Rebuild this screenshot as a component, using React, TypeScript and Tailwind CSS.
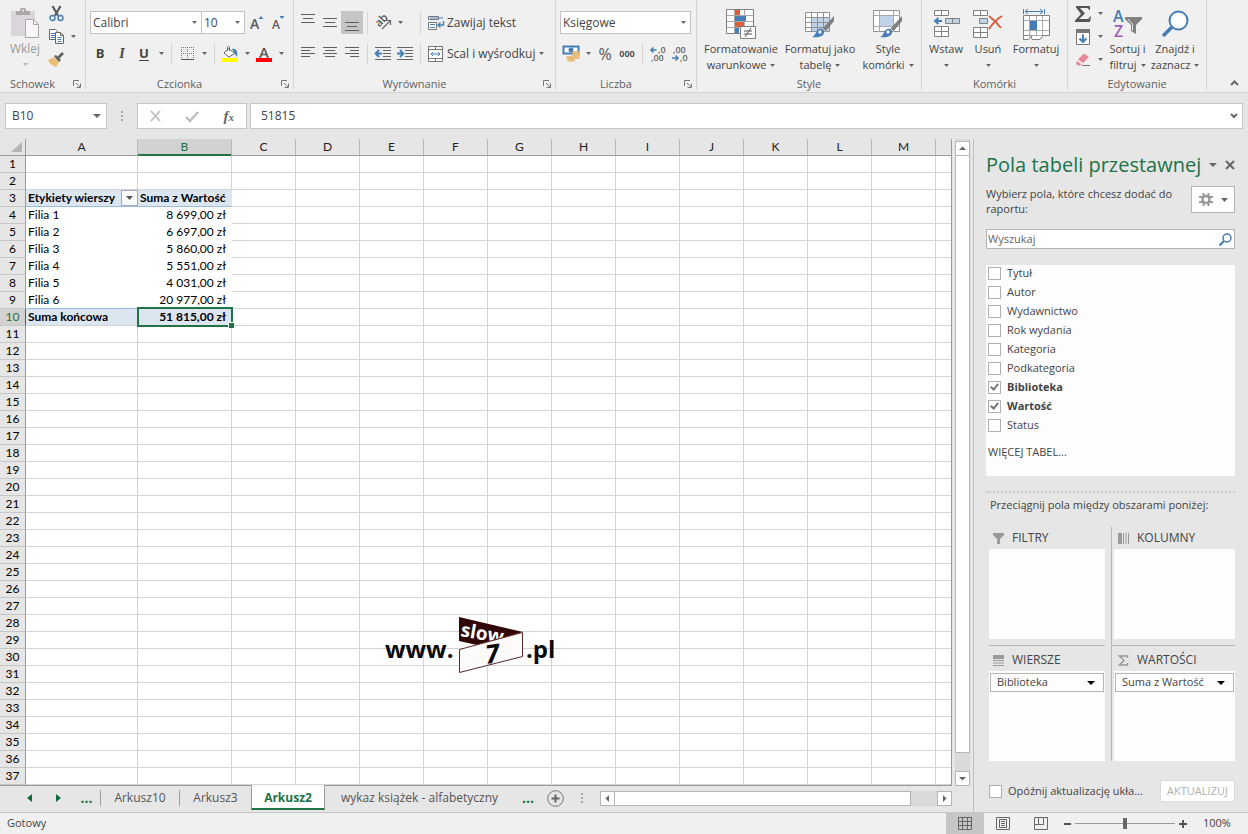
import type { ReactNode } from 'react';
import clsx from 'clsx';

const columns = ['A', 'B', 'C', 'D', 'E', 'F', 'G', 'H', 'I', 'J', 'K', 'L', 'M'];
const rowNumbers = Array.from({ length: 37 }, (_, i) => i + 1);

const pivotRows: Record<number, { label: string; value: string }> = {
  4: { label: 'Filia 1', value: '8 699,00 zł' },
  5: { label: 'Filia 2', value: '6 697,00 zł' },
  6: { label: 'Filia 3', value: '5 860,00 zł' },
  7: { label: 'Filia 4', value: '5 551,00 zł' },
  8: { label: 'Filia 5', value: '4 031,00 zł' },
  9: { label: 'Filia 6', value: '20 977,00 zł' },
};

const fields = [
  { name: 'Tytuł', checked: false },
  { name: 'Autor', checked: false },
  { name: 'Wydawnictwo', checked: false },
  { name: 'Rok wydania', checked: false },
  { name: 'Kategoria', checked: false },
  { name: 'Podkategoria', checked: false },
  { name: 'Biblioteka', checked: true },
  { name: 'Wartość', checked: true },
  { name: 'Status', checked: false },
];

function Icon({ w, h, children }: { w: number; h: number; children: ReactNode }) {
  return (
    <svg width={w} height={h} viewBox={`0 0 ${w} ${h}`} fill="none" className="shrink-0 overflow-visible" aria-hidden="true">
      {children}
    </svg>
  );
}

function Caret({ className = 'text-[#666]' }: { className?: string }) {
  return (
    <svg width="5" height="3" viewBox="0 0 5 3" className={clsx('shrink-0', className)} aria-hidden="true">
      <path d="M0 0h5L2.5 3z" fill="currentColor" />
    </svg>
  );
}

function WideCaret({ className = 'text-[#666]' }: { className?: string }) {
  return (
    <svg width="8" height="4" viewBox="0 0 8 4" className={clsx('shrink-0', className)} aria-hidden="true">
      <path d="M0 0h8L4 4z" fill="currentColor" />
    </svg>
  );
}

function Tool({ label, active, children }: { label: string; active?: boolean; children: ReactNode }) {
  return (
    <button
      type="button"
      aria-label={label}
      className={clsx('flex h-[23px] w-[22px] shrink-0 items-center justify-center', active && 'bg-[#c5c5c5]')}
    >
      {children}
    </button>
  );
}

function Drop({ label }: { label: string }) {
  return (
    <button type="button" aria-label={label} className="flex h-[23px] w-3 shrink-0 items-center justify-center">
      <Caret />
    </button>
  );
}

function Divider() {
  return <span className="mx-1 h-[22px] w-px shrink-0 bg-[#d5d5d5]" />;
}

function Group({ title, className, launcher, children }: {
  title: string;
  className: string;
  launcher?: boolean;
  children: ReactNode;
}) {
  return (
    <section aria-label={title} className={clsx('relative flex shrink-0 flex-col border-r border-[#d5d5d5]', className)}>
      <div className="h-[78px] shrink-0">{children}</div>
      <div className="flex h-3 items-center pr-2">
        <span className={clsx('flex-1 text-center text-[11px] leading-4 text-[#5e5e5e]', launcher ? 'pr-3' : 'pl-2')}>{title}</span>
        {launcher && (
          <button type="button" aria-label={`${title} – więcej opcji`} className="absolute right-1 bottom-[2px]">
            <Icon w={8} h={8}>
              <path d="M.5 6V.5H6M3 3l4 4M7.5 3.5v4h-4" stroke="#777" />
            </Icon>
          </button>
        )}
      </div>
    </section>
  );
}

function BigButton({ icon, lines, className }: { icon: ReactNode; lines: string[]; className: string }) {
  return (
    <button type="button" className={clsx('flex shrink-0 flex-col items-center text-[11px] leading-4', className)}>
      <span className="flex h-[34px] items-center">{icon}</span>
      <span className="whitespace-nowrap">{lines[0]}</span>
      <span className="flex h-4 items-center gap-1 whitespace-nowrap">
        {lines[1]}
        <Caret />
      </span>
    </button>
  );
}

function Combo({ label, value, className }: { label: string; value: string; className: string }) {
  return (
    <span className={clsx('relative flex h-[23px] items-center border border-[#c3c3c3] bg-white', className)}>
      <select aria-label={label} defaultValue={value} className="h-full w-full appearance-none pl-[2px] text-xs outline-none">
        <option>{value}</option>
      </select>
      <span className="pointer-events-none absolute right-1">
        <Caret />
      </span>
    </span>
  );
}

function Lines({ widths, align }: { widths: number[]; align: 'l' | 'c' | 'r' }) {
  return (
    <Icon w={14} h={widths.length * 4 - 3}>
      {widths.map((w, i) => {
        const x = align === 'l' ? 0 : align === 'r' ? 14 - w : (14 - w) / 2;
        return <rect key={i} x={x} y={i * (widths.length === 4 ? 3 : 4)} width={w} height="1" fill="#5f5f5f" />;
      })}
    </Icon>
  );
}

function ClipboardGroup() {
  return (
    <Group title="Schowek" launcher className="w-[86px]">
      <div className="flex pl-[7px]">
        <button type="button" className="flex w-9 flex-col items-center pt-2 text-xs leading-4 text-[#9b9b9b]">
          <Icon w={28} h={31}>
            <path d="M0 3h24v25H0z" fill="#d9d5da" />
            <path d="M5 3h4V1.500A1.500 1.500 0 0 1 10.500 0h3A1.500 1.500 0 0 1 15 1.500V3h4v4H5z" fill="#aaa6aa" />
            <circle cx="12" cy="2.500" r="1" fill="#f0f0f0" />
            <path d="M14.500 11.500h8l5 5v13h-13z" fill="#f8f6f8" stroke="#aaa6aa" />
            <path d="M22.500 11.500v5h5" stroke="#aaa6aa" />
          </Icon>
          <span className="mt-[2px]">Wklej</span>
          <Caret className="mt-[6px] text-[#b5b5b5]" />
        </button>
        <div className="flex flex-col pt-[2px] pl-[2px]">
          <Tool label="Wytnij">
            <Icon w={15} h={16}>
              <path d="M3.500 0l5.500 9.500M11.500 0L6 9.500" stroke="#5a5a5a" strokeWidth="2.200" />
              <circle cx="3.500" cy="12" r="2.500" stroke="#457db5" strokeWidth="1.400" />
              <circle cx="11.500" cy="12" r="2.500" stroke="#457db5" strokeWidth="1.400" />
            </Icon>
          </Tool>
          <div className="flex">
            <Tool label="Kopiuj">
              <Icon w={15} h={15}>
                <path d="M.5.5h6l3 3v7h-9z" fill="#fff" stroke="#666" />
                <path d="M2 4.500h4M2 6.500h4M2 8.500h4" stroke="#4a80bb" />
                <path d="M6.500 3.500h5l3 3v8h-8z" fill="#fff" stroke="#666" />
                <path d="M11.500 3.500v3h3" stroke="#666" />
                <path d="M8.500 8.500h4M8.500 10.500h4M8.500 12.500h4" stroke="#4a80bb" />
              </Icon>
            </Tool>
            <Drop label="Opcje kopiowania" />
          </div>
          <Tool label="Malarz formatów">
            <Icon w={16} h={14}>
              <path d="M0 7l6-3 5 5-3 5-3-1-1-2-1 1z" fill="#eebd77" />
              <path d="M6 3l2-1 5 5-2 2z" fill="#5f5f5f" />
              <path d="M10 5l5-5" stroke="#5f5f5f" strokeWidth="2.600" />
            </Icon>
          </Tool>
        </div>
      </div>
    </Group>
  );
}

function FontGroup() {
  return (
    <Group title="Czcionka" launcher className="w-[208px]">
      <div className="flex flex-col gap-2 pt-[11px] pl-[3px]">
        <div className="flex pl-px">
          <Combo label="Czcionka" value="Calibri" className="w-28" />
          <Combo label="Rozmiar czcionki" value="10" className="-ml-px w-11" />
          <button type="button" aria-label="Zwiększ rozmiar czcionki" className="ml-[5px] flex w-[17px] items-center">
            <Icon w={14} h={13}>
              <text x="0" y="13" fontSize="14" fontWeight="600" fill="#5a5a5a">A</text>
              <path d="M8.500 3h5L11 0z" fill="#457db5" />
            </Icon>
          </button>
          <button type="button" aria-label="Zmniejsz rozmiar czcionki" className="ml-1 flex w-[17px] items-center">
            <Icon w={14} h={13}>
              <text x="1" y="13" fontSize="12" fontWeight="600" fill="#5a5a5a">A</text>
              <path d="M8.500 0h5L11 3z" fill="#457db5" />
            </Icon>
          </button>
        </div>
        <div className="flex items-center">
          <Tool label="Pogrubienie"><b className="text-[13px]">B</b></Tool>
          <Tool label="Kursywa"><i className="text-sm font-bold [font-family:'Liberation_Serif',serif]">I</i></Tool>
          <Tool label="Podkreślenie"><b className="text-[13px] underline underline-offset-2">U</b></Tool>
          <Drop label="Opcje podkreślenia" />
          <Divider />
          <Tool label="Obramowanie">
            <Icon w={13} h={13}>
              <path d="M.5 0v12M6.500 0v12M12.500 0v12M0 .5h13M0 6.500h13" stroke="#777" strokeDasharray="1 1" />
              <path d="M0 12.500h13" stroke="#555" />
            </Icon>
          </Tool>
          <Drop label="Opcje obramowania" />
          <Divider />
          <Tool label="Kolor wypełnienia">
            <Icon w={16} h={16}>
              <path d="M6.500 2.500l6 5-5.500 3.500-5-4z" fill="#fff" stroke="#666" />
              <path d="M5.500 5V1.500a1 1 0 0 1 2 0V5" stroke="#666" />
              <path d="M10 3c4-1 6 2 5 8l-2-3z" fill="#457db5" />
              <path d="M0 12h16v4H0z" fill="#ff0" />
            </Icon>
          </Tool>
          <Drop label="Opcje wypełnienia" />
          <Tool label="Kolor czcionki">
            <Icon w={16} h={16}>
              <text x="8" y="12" fontSize="15" fontWeight="600" textAnchor="middle" fill="#5a5a5a">A</text>
              <path d="M0 12h16v4H0z" fill="#f00" />
            </Icon>
          </Tool>
          <Drop label="Opcje koloru czcionki" />
        </div>
      </div>
    </Group>
  );
}

function AlignGroup() {
  return (
    <Group title="Wyrównanie" launcher className="w-[262px]">
      <div className="flex flex-col gap-2 pt-[11px] pl-[3px]">
        <div className="flex items-center">
          <Tool label="Wyrównaj do góry"><span className="pb-2"><Lines widths={[14, 10, 14]} align="c" /></span></Tool>
          <Tool label="Wyrównaj do środka"><Lines widths={[14, 10, 14]} align="c" /></Tool>
          <Tool label="Wyrównaj do dołu" active><span className="pt-2"><Lines widths={[14, 10, 14]} align="c" /></span></Tool>
          <Divider />
          <Tool label="Orientacja">
            <Icon w={17} h={15}>
              <text x="2" y="11" fontSize="11" fontWeight="600" fill="#555" transform="rotate(-45 5 9)">ab</text>
              <path d="M7 14l8-8M11 5.500h4.500V10" stroke="#666" strokeWidth="1.200" />
            </Icon>
          </Tool>
          <Drop label="Opcje orientacji" />
          <span className="w-[10px]" />
          <Divider />
          <button type="button" className="ml-[3px] flex h-[23px] items-center gap-[3px] text-xs">
            <Icon w={16} h={16}>
              <path d="M.5 1.500h10v3H.5zM.5 7.500h8v7h-8z" fill="#fff" stroke="#777" />
              <path d="M2 3h13M2 9.500h5M2 12.500h5" stroke="#457db5" />
              <path d="M15.500 6v4H10M12.500 7.500L10 10l2.500 2.500" stroke="#457db5" strokeWidth="1.400" />
            </Icon>
            Zawijaj tekst
          </button>
        </div>
        <div className="flex items-center">
          <Tool label="Wyrównaj do lewej"><Lines widths={[14, 9, 14, 9]} align="l" /></Tool>
          <Tool label="Wyśrodkuj"><Lines widths={[14, 10, 14, 10]} align="c" /></Tool>
          <Tool label="Wyrównaj do prawej"><Lines widths={[14, 9, 14, 9]} align="r" /></Tool>
          <Divider />
          <Tool label="Zmniejsz wcięcie">
            <Icon w={16} h={13}>
              <path d="M0 .5h16M8 3.500h8M8 6.500h8M8 9.500h8M0 12.500h16" stroke="#666" />
              <path d="M7 6.500H2M4 3L.7 6.500 4 10" stroke="#457db5" strokeWidth="2" />
            </Icon>
          </Tool>
          <Tool label="Zwiększ wcięcie">
            <Icon w={16} h={13}>
              <path d="M0 .5h16M8 3.500h8M8 6.500h8M8 9.500h8M0 12.500h16" stroke="#666" />
              <path d="M0 6.500h5M3 3l3.300 3.500L3 10" stroke="#457db5" strokeWidth="2" />
            </Icon>
          </Tool>
          <Divider />
          <button type="button" className="ml-[3px] flex h-[23px] items-center gap-[3px] text-xs">
            <Icon w={16} h={16}>
              <path d="M.5.5h14v15H.5zM.5 3.500h14M.5 12.500h14M7.500.5v3M7.500 12.500v3" fill="#fff" stroke="#777" />
              <path d="M3 8h9M5 6L3 8l2 2M10 6l2 2-2 2" stroke="#457db5" />
            </Icon>
            Scal i wyśrodkuj
          </button>
          <Drop label="Opcje scalania" />
        </div>
      </div>
    </Group>
  );
}

function NumberGroup() {
  return (
    <Group title="Liczba" launcher className="w-[141px]">
      <div className="flex flex-col gap-2 pt-[11px] pl-1">
        <Combo label="Format liczb" value="Księgowe" className="mr-[5px]" />
        <div className="flex items-center">
          <Tool label="Format księgowy">
            <Icon w={17} h={16}>
              <path d="M.5.5h15v7H.5z" fill="#fff" stroke="#457db5" strokeWidth="2" />
              <circle cx="8" cy="4" r="2.500" fill="#457db5" />
              <ellipse cx="13" cy="6.500" rx="4" ry="1.500" fill="#e9bb78" />
              <ellipse cx="13" cy="9" rx="4" ry="1.500" fill="#e9bb78" />
              <ellipse cx="13" cy="11.500" rx="4" ry="1.500" fill="#e9bb78" />
              <ellipse cx="7" cy="11.500" rx="4" ry="1.500" fill="#e9bb78" />
              <ellipse cx="8" cy="14" rx="4" ry="1.500" fill="#e9bb78" />
            </Icon>
          </Tool>
          <Drop label="Opcje waluty" />
          <Tool label="Zapis procentowy"><span className="text-base text-[#555]">%</span></Tool>
          <Tool label="Zapis dziesiętny"><b className="text-[9px] text-[#555]">000</b></Tool>
          <Divider />
          <Tool label="Zwiększ dziesiętne">
            <Icon w={16} h={16}>
              <text x="8" y="7" fontSize="9" fontWeight="600" fill="#666">,0</text>
              <text x="1" y="15" fontSize="9" fontWeight="600" fill="#666">,00</text>
              <path d="M6.500 4h-5M3.500 1.500L1 4l2.500 2.500" stroke="#457db5" strokeWidth="1.500" />
            </Icon>
          </Tool>
          <Tool label="Zmniejsz dziesiętne">
            <Icon w={16} h={16}>
              <text x="1" y="7" fontSize="9" fontWeight="600" fill="#666">,00</text>
              <text x="8" y="15" fontSize="9" fontWeight="600" fill="#666">,0</text>
              <path d="M0 12h5.500M3.500 9.500L6 12l-2.500 2.500" stroke="#457db5" strokeWidth="1.500" />
            </Icon>
          </Tool>
        </div>
      </div>
    </Group>
  );
}

function Brush() {
  return (
    <>
      <path d="M29 7L17 20l3 3L29 12z" fill="#808080" />
      <path d="M17.500 19.500l3 3" stroke="#f0f0f0" />
      <path d="M7 28c4-1 3-6 7-8 3-1 6 1 5 4-1 4-7 5-12 4z" fill="#457db5" />
      <circle cx="15" cy="23" r="1.800" fill="#e8f0f8" />
    </>
  );
}

function StylesGroup() {
  return (
    <Group title="Style" className="w-[225px]">
      <div className="flex pt-[7px] pl-1">
        <BigButton
          className="w-20"
          lines={['Formatowanie', 'warunkowe']}
          icon={
            <Icon w={31} h={31}>
              <path d="M.5.5h27v24H.5z" fill="#fff" stroke="#808080" />
              <path d="M8.500 1v23M18.500 1v23M1 6.500h26M1 12.500h26M1 18.500h26" stroke="#aaa" />
              <path d="M9 1h5v5H9zM9 13h9v5H9z" fill="#d9603b" />
              <path d="M9 7h11v5H9zM9 19h4v5H9z" fill="#457db5" />
              <path d="M14.500 17.500h15v12h-15z" fill="#fff" stroke="#808080" />
              <path d="M18 22h8M18 25h8M25 19l-6 9" stroke="#555" />
            </Icon>
          }
        />
        <BigButton
          className="w-[78px]"
          lines={['Formatuj jako', 'tabelę']}
          icon={
            <Icon w={30} h={30}>
              <path d="M.5 3.500h24v19H.5z" fill="#fff" />
              <path d="M6.500 9h18v14h-18z" fill="#c0d3e9" />
              <path d="M.5 3.500h24v19H.5zM6.500 4v19M12.500 4v19M18.500 4v19M1 8.500h24M1 13.500h24M1 18.500h24" stroke="#909090" />
              <Brush />
            </Icon>
          }
        />
        <BigButton
          className="w-[58px]"
          lines={['Style', 'komórki']}
          icon={
            <Icon w={30} h={30}>
              <path d="M.5 1.500h26v21H.5z" fill="#fff" stroke="#909090" />
              <path d="M6.500 2v21M20.500 2v21M1 6.500h26M1 17.500h26" stroke="#aaa" />
              <path d="M7 7h13v10H7z" fill="#c0d3e9" />
              <Brush />
            </Icon>
          }
        />
      </div>
    </Group>
  );
}

function CellsGroup() {
  return (
    <Group title="Komórki" className="w-[146px]">
      <div className="flex pt-[7px] pl-1">
        <BigButton
          className="w-10"
          lines={['Wstaw', '']}
          icon={
            <Icon w={27} h={28}>
              <path d="M1.500.5h14v5h-14zM8.500.5v5M1.500 16.500h14v10h-14zM8.500 16.500v10M1.500 21.500h14" fill="#fff" stroke="#808080" />
              <path d="M12.500 8.500h14v5h-14zM19.500 8.500v5" fill="#c0d3e9" stroke="#808080" />
              <path d="M9 11H3M5.500 8L2 11l3.500 3" stroke="#457db5" strokeWidth="2" />
            </Icon>
          }
        />
        <BigButton
          className="w-11"
          lines={['Usuń', '']}
          icon={
            <Icon w={30} h={28}>
              <path d="M.5.5h14v5H.5zM7.500.5v5M.5 17.500h14v10H.5zM7.500 17.500v10M.5 22.500h14" fill="#fff" stroke="#808080" />
              <path d="M6.500 8.500h8v5h-8z" fill="#c0d3e9" stroke="#808080" />
              <path d="M16 6c4 3 8 7 12 12M29 6c-5 3-9 7-13 13" stroke="#d9603b" strokeWidth="2" />
            </Icon>
          }
        />
        <BigButton
          className="w-[52px]"
          lines={['Formatuj', '']}
          icon={
            <Icon w={29} h={31}>
              <path d="M1.500 0v5M22.500 0v5M3 2.500h18M6 0L3 2.500 6 5M18 0l3 2.500L18 5" stroke="#457db5" />
              <path d="M1.500 6.500h26v20h-26z" fill="#fff" stroke="#808080" />
              <path d="M7.500 7v19M14.500 7v19M20.500 7v19M2 11.500h25M2 21.500h25" stroke="#aaa" />
              <path d="M8 12h7v9H8z" fill="#457db5" />
              <path d="M1.500 27v3.500h5L9 27l1 3.500h8l3-4" fill="#fff" stroke="#808080" />
            </Icon>
          }
        />
      </div>
    </Group>
  );
}

function EditGroup() {
  return (
    <Group title="Edytowanie" className="w-[139px]">
      <div className="flex pl-1">
        <div className="flex w-[34px] shrink-0 flex-col pt-[2px]">
          <div className="flex">
            <Tool label="Autosumowanie">
              <Icon w={16} h={16}>
                <path d="M1 0h14v4h-1c-.4-1.400-1-2-3-2H5l5 5.500L4 13h8c2 0 2.500-1 3-2.500h1L15 16H0v-1.500L6 8 1 1.500z" fill="#555" />
              </Icon>
            </Tool>
            <Drop label="Opcje sumowania" />
          </div>
          <div className="flex">
            <Tool label="Wypełnienie">
              <Icon w={14} h={16}>
                <path d="M.5.5h13v15H.5z" fill="#fff" stroke="#777" />
                <path d="M0 0h14v4H0z" fill="#777" />
                <path d="M7 5.500V13M3.500 9.500L7 13l3.500-3.500" stroke="#457db5" strokeWidth="2" />
              </Icon>
            </Tool>
            <Drop label="Opcje wypełnienia serii" />
          </div>
          <div className="flex">
            <Tool label="Wyczyść">
              <Icon w={14} h={14}>
                <path d="M8 .5L13 4 7 10 2 6.500z" fill="#ea8795" />
                <path d="M1 8l4.500 3.200L4 12.500H1.500L0 10.500z" fill="#ea8795" />
                <path d="M6 12.500h8" stroke="#777" />
              </Icon>
            </Tool>
            <Drop label="Opcje czyszczenia" />
          </div>
        </div>
        <BigButton
          className="w-[43px] pt-[7px]"
          lines={['Sortuj i', 'filtruj']}
          icon={
            <Icon w={30} h={30}>
              <text x="0" y="13" fontSize="16" fontWeight="600" fill="#457db5">A</text>
              <text x="1" y="28" fontSize="16" fontWeight="600" fill="#9b5fba">Z</text>
              <path d="M12 8h17v2l-6 6v9l-5-3v-6l-6-6z" fill="#808080" />
              <path d="M15 10l4.500 5.500v6" stroke="#e4e4e4" />
            </Icon>
          }
        />
        <BigButton
          className="w-[52px] pt-[7px]"
          lines={['Znajdź i', 'zaznacz']}
          icon={
            <Icon w={28} h={28}>
              <circle cx="17.500" cy="10.500" r="9" fill="#fff" stroke="#457db5" strokeWidth="2" />
              <path d="M11 17L2 26" stroke="#457db5" strokeWidth="3.500" />
            </Icon>
          }
        />
      </div>
    </Group>
  );
}

function FormulaBar() {
  return (
    <div className="flex items-center bg-[#e6e6e6] px-[5px] py-[10px] text-xs">
      <div className="flex h-[26px] w-[102px] items-center border border-[#c6c6c6] bg-white pr-[5px]">
        <input aria-label="Pole nazwy" defaultValue="B10" className="w-full min-w-0 flex-1 pl-[6px] outline-none" />
        <WideCaret />
      </div>
      <div className="flex w-[30px] flex-col items-center gap-[2px]">
        {[0, 1, 2].map(i => <span key={i} className="size-[2px] bg-[#aaa]" />)}
      </div>
      <div className="flex h-[26px] w-[110px] items-center justify-around border border-[#c6c6c6] bg-white">
        <button type="button" aria-label="Anuluj">
          <Icon w={11} h={10}><path d="M1 0l9 10M10 0L1 10" stroke="#bdbdbd" strokeWidth="1.800" /></Icon>
        </button>
        <button type="button" aria-label="Wpis">
          <Icon w={14} h={11}><path d="M1 6l4 4L13 1" stroke="#bdbdbd" strokeWidth="2.400" /></Icon>
        </button>
        <button type="button" className="text-[15px] leading-none font-bold text-[#666] italic [font-family:'Liberation_Serif',serif]">
          f<span className="text-[11px]">x</span>
        </button>
      </div>
      <div className="ml-[3px] flex h-[26px] flex-1 items-center border border-[#c6c6c6] bg-white pr-1">
        <input aria-label="Pasek formuły" defaultValue="51815" className="min-w-0 flex-1 pl-[10px] text-xs outline-none" />
        <button type="button" aria-label="Rozwiń pasek formuły">
          <Icon w={8} h={6}><path d="M1 1l3 3 3-3" stroke="#666" strokeWidth="2" /></Icon>
        </button>
      </div>
    </div>
  );
}

function Cell({ row, col }: { row: number; col: string }) {
  const base = 'h-[17px] border-b p-0';
  if (col === 'A' && row === 3) {
    return (
      <td className={clsx(base, 'border-[#9bbce0] bg-[#dce6f1] font-bold whitespace-nowrap')}>
        <div className="flex h-4 items-center justify-between pl-[2px]">
          Etykiety wierszy
          <button type="button" aria-label="Filtr etykiet" className="flex h-4 w-[17px] items-center justify-center border border-[#a5acb5] bg-[#fbfcfd]">
            <svg width="7" height="4" viewBox="0 0 7 4" aria-hidden="true"><path d="M0 0h7L3.500 4z" fill="#555" /></svg>
          </button>
        </div>
      </td>
    );
  }
  if (col === 'B' && row === 3) {
    return <td className={clsx(base, 'border-[#9bbce0] bg-[#dce6f1] pl-[2px] font-bold whitespace-nowrap')}>Suma z Wartość</td>;
  }
  if (col === 'A' && row === 10) {
    return <td className={clsx(base, 'border-[#d4d4d4] bg-[#dce6f1] pl-[2px] font-bold')}>Suma końcowa</td>;
  }
  if (col === 'B' && row === 10) {
    return (
      <td className={clsx(base, 'relative border-[#d4d4d4] bg-[#dce6f1] pr-[6px] text-right font-bold')}>
        51 815,00 zł
        <span className="absolute -inset-x-px -top-[2px] -bottom-[2px] border-2 border-[#217346]" />
        <span className="absolute -right-[2px] -bottom-[3px] size-[6px] border-t border-l border-white bg-[#217346]" />
      </td>
    );
  }
  const data = pivotRows[row];
  if (data && col === 'A') {
    return <td className={clsx(base, 'pl-[2px]', row === 9 ? 'border-[#9bbce0]' : 'border-white')}>{data.label}</td>;
  }
  if (data && col === 'B') {
    return <td className={clsx(base, 'pr-[6px] text-right', row === 9 ? 'border-[#9bbce0]' : 'border-white')}>{data.value}</td>;
  }
  return <td className={clsx(base, 'border-r border-[#d4d4d4]')} />;
}

function Logo() {
  return (
    <svg
      width="172"
      height="60"
      viewBox="0 0 172 60"
      role="img"
      aria-label="www.slow7.pl"
      className="absolute top-[476px] left-[385px]"
    >
      <defs>
        <clipPath id="ribbon">
          <path d="M74 2l64 15-49 13-15-3z" />
        </clipPath>
      </defs>
      <text x="0" y="43" fontSize="24" fontWeight="700" fill="#0b0b0b">www.</text>
      <path d="M74 2l64 15-46 13-18-4z" fill="#300606" />
      <g clipPath="url(#ribbon)">
        <text x="75" y="21" fontSize="19" fontWeight="700" fill="#fff" transform="rotate(10 75 21)">slow</text>
      </g>
      <path d="M74.500 34.500L137.500 17.500v24L74.500 57.500z" fill="#fdfafb" stroke="#5a2a2a" />
      <text x="100" y="48" fontSize="26" fontWeight="700" fontStyle="italic" fill="#0b0b0b" transform="rotate(-8 107 38)">7</text>
      <text x="141" y="43" fontSize="24" fontWeight="700" fill="#0b0b0b">.pl</text>
    </svg>
  );
}

function Sheet() {
  return (
    <div className="relative min-w-0 flex-1 overflow-hidden border-r border-b border-[#9b9b9b]">
      <table className="w-full table-fixed border-separate border-spacing-0 bg-white text-xs leading-4 text-black [font-family:Lato,sans-serif]">
        <colgroup>
          <col className="w-[26px]" />
          <col className="w-28" />
          <col className="w-[94px]" />
          {columns.slice(2).map(c => <col key={c} className="w-16" />)}
          <col />
        </colgroup>
        <thead>
          <tr className="text-[#222]">
            <th className="h-[17px] border-r border-b border-[#9b9b9b] bg-[#e6e6e6] p-0">
              <svg width="11" height="10" viewBox="0 0 11 10" className="mr-[3px] ml-auto" aria-hidden="true">
                <path d="M11 0v10H0z" fill="#b4b4b4" />
              </svg>
            </th>
            {columns.map(c => (
              <th
                key={c}
                className={clsx(
                  'border-r border-b border-r-[#b8b8b8] p-0 font-normal',
                  c === 'B'
                    ? 'border-b-[#217346] bg-[#d2d2d2] text-[#217346] shadow-[inset_0_-1px_0_#217346]'
                    : 'border-b-[#9b9b9b] bg-[#e6e6e6]',
                )}
              >
                {c}
              </th>
            ))}
            <th className="border-b border-[#9b9b9b] bg-[#e6e6e6] p-0" />
          </tr>
        </thead>
        <tbody>
          {rowNumbers.map(row => (
            <tr key={row}>
              <th
                className={clsx(
                  'h-[17px] border-r border-b border-b-[#c6c6c6] p-0 font-normal',
                  row === 10 ? 'border-r-[#217346] bg-[#d2d2d2] text-[#217346]' : 'border-r-[#9b9b9b] bg-[#e6e6e6]',
                )}
              >
                {row}
              </th>
              {columns.map(c => <Cell key={c} row={row} col={c} />)}
              <td className="border-b border-[#d4d4d4] p-0" />
            </tr>
          ))}
        </tbody>
      </table>
      <Logo />
    </div>
  );
}

function ScrollButton({ label, d }: { label: string; d: string }) {
  return (
    <button type="button" aria-label={label} className="flex size-[15px] shrink-0 items-center justify-center border border-[#b5b5b5] bg-white">
      <Icon w={7} h={7}><path d={d} fill="#666" /></Icon>
    </button>
  );
}

function SheetTabs() {
  const sep = 'my-1 w-px bg-[#9b9b9b]';
  return (
    <div className="flex h-[26px] items-stretch pr-[21px] pb-[2px] text-xs text-[#555]">
      <button type="button" aria-label="Poprzedni arkusz" className="ml-[15px] w-[29px]">
        <svg width="5" height="8" viewBox="0 0 5 8" className="mx-auto" aria-hidden="true"><path d="M5 0v8L0 4z" fill="#0e6b3b" /></svg>
      </button>
      <button type="button" aria-label="Następny arkusz" className="w-[29px]">
        <svg width="5" height="8" viewBox="0 0 5 8" className="mx-auto" aria-hidden="true"><path d="M0 0v8l5-4z" fill="#0e6b3b" /></svg>
      </button>
      <button type="button" className="w-[27px] text-sm font-bold text-[#217346]">...</button>
      <span className={sep} />
      <button type="button" className="w-[78px]">Arkusz10</button>
      <span className={sep} />
      <button type="button" className="w-[71px]">Arkusz3</button>
      <button type="button" className="z-10 -mt-px w-[74px] border-x border-b-2 border-x-[#9b9b9b] border-b-[#217346] bg-white pt-[2px] font-bold text-[#217346]">
        Arkusz2
      </button>
      <button type="button" className="pr-[22px] pl-4 whitespace-nowrap">wykaz książek - alfabetyczny</button>
      <button type="button" className="w-4 text-sm font-bold text-[#217346]">...</button>
      <button type="button" aria-label="Nowy arkusz" className="ml-[11px]">
        <Icon w={17} h={17}>
          <circle cx="8.500" cy="8.500" r="7.800" stroke="#777" />
          <path d="M8.500 4.500v8M4.500 8.500h8" stroke="#666" strokeWidth="2" />
        </Icon>
      </button>
      <div className="flex w-9 flex-col items-center justify-center gap-[2px]">
        {[0, 1, 2].map(i => <span key={i} className="size-[2px] bg-[#aaa]" />)}
      </div>
      <div className="my-auto flex min-w-0 flex-1 bg-[#dadada]">
        <ScrollButton label="Przewiń w lewo" d="M5 0v7L1.500 3.500z" />
        <span className="-ml-px h-[15px] w-[297px] border border-[#b5b5b5] bg-white" />
        <span className="flex-1" />
        <ScrollButton label="Przewiń w prawo" d="M2 0v7l3.500-3.500z" />
      </div>
    </div>
  );
}

const checkboxClass =
  "relative size-[13px] shrink-0 appearance-none border border-[#b0b0b0] bg-white checked:after:absolute checked:after:top-0 checked:after:left-[3px] checked:after:h-2 checked:after:w-[5px] checked:after:rotate-40 checked:after:border-r-2 checked:after:border-b-2 checked:after:border-[#777] checked:after:content-['']";

function Area({ title, icon, item }: { title: string; icon: ReactNode; item?: string }) {
  return (
    <div className="min-w-0">
      <h3 className="flex h-[22px] items-center gap-2 pl-1 text-xs">
        {icon}
        {title}
      </h3>
      <div className="h-[90px] bg-[#fdfdfd] px-px pt-[2px]">
        {item && (
          <button type="button" className="flex h-[19px] w-full items-center justify-between border border-[#b5b5b5] pr-2 pl-[6px] text-[11px] whitespace-nowrap">
            {item}
            <svg width="8" height="4" viewBox="0 0 8 4" aria-hidden="true"><path d="M0 0h8L4 4z" fill="#000" /></svg>
          </button>
        )}
      </div>
    </div>
  );
}

function PivotPane() {
  return (
    <aside className="flex w-[275px] shrink-0 flex-col border-l border-[#c0c0c0] pr-[13px] pl-3 text-[11px] text-[#444]">
      <div className="flex items-center pt-[9px]">
        <h2 className="flex-1 text-xl leading-[34px] whitespace-nowrap text-[#217346]">Pola tabeli przestawnej</h2>
        <button type="button" aria-label="Opcje okienka" className="mr-2"><WideCaret /></button>
        <button type="button" aria-label="Zamknij">
          <Icon w={10} h={10}><path d="M1 1l8 8M9 1L1 9" stroke="#666" strokeWidth="2" /></Icon>
        </button>
      </div>
      <div className="flex justify-between pt-1">
        <p className="w-[200px] leading-[15px]">Wybierz pola, które chcesz dodać do raportu:</p>
        <button type="button" aria-label="Narzędzia" className="flex h-[27px] w-11 shrink-0 items-center justify-center gap-2 border border-[#b5b5b5] bg-white">
          <Icon w={14} h={13}>
            <path d="M4.500 0v13M9.500 0v13M0 4h14M0 9h14" stroke="#999" strokeWidth="2" />
            <circle cx="7" cy="6.500" r="3.500" fill="#fff" stroke="#999" strokeWidth="2.400" />
          </Icon>
          <svg width="7" height="4" viewBox="0 0 7 4" aria-hidden="true"><path d="M0 0h7L3.500 4z" fill="#666" /></svg>
        </button>
      </div>
      <div className="mt-[13px] flex h-5 items-center border border-[#b5b5b5] bg-white pr-[2px]">
        <input aria-label="Wyszukaj" placeholder="Wyszukaj" className="min-w-0 flex-1 pl-[1px] outline-none placeholder:text-[#666]" />
        <Icon w={13} h={13}>
          <circle cx="8" cy="5" r="4" stroke="#457db5" strokeWidth="1.500" />
          <path d="M5 8l-4.500 4.500" stroke="#457db5" strokeWidth="2.200" />
        </Icon>
      </div>
      <div className="mt-4 h-[211px] bg-[#fdfdfd] pl-[2px]">
        {fields.map(f => (
          <label key={f.name} className={clsx('flex h-[19px] items-center gap-[6px] pb-[3px]', f.checked && 'font-bold')}>
            <input type="checkbox" defaultChecked={f.checked} className={checkboxClass} />
            {f.name}
          </label>
        ))}
        <a href="#tabele" className="mt-2 block leading-4">WIĘCEJ TABEL...</a>
      </div>
      <div className="mt-[15px] border-t-2 border-dotted border-[#ccc]" />
      <p className="pt-1 pl-1 leading-4">Przeciągnij pola między obszarami poniżej:</p>
      <div className="mt-[14px] ml-[3px] grid grid-cols-[116px_1fr]">
        <div className="border-b border-[#b5b5b5] pb-[6px]">
          <Area
            title="FILTRY"
            icon={<Icon w={11} h={11}><path d="M0 0h11v2L7 6v5H4V6L0 2z" fill="#999" /></Icon>}
          />
        </div>
        <div className="ml-[6px] border-b border-l border-[#b5b5b5] pb-[6px] pl-[2px]">
          <Area
            title="KOLUMNY"
            icon={<Icon w={11} h={11}><path d="M0 0h4v11H0zM5 0h1v11H5zM7.500 0h1v11h-1zM10 0h1v11h-1z" fill="#999" /></Icon>}
          />
        </div>
        <div className="pt-[3px]">
          <Area
            title="WIERSZE"
            item="Biblioteka"
            icon={<Icon w={11} h={11}><path d="M0 0h11v4H0zM0 5h11v1H0zM0 7.500h11v1H0zM0 10h11v1H0z" fill="#999" /></Icon>}
          />
        </div>
        <div className="ml-[6px] border-l border-[#b5b5b5] pt-[3px] pl-[2px]">
          <Area
            title="WARTOŚCI"
            item="Suma z Wartość"
            icon={<Icon w={11} h={11}><path d="M9.500 3V1H1.500L6 5.500 1.500 10h8V8" stroke="#999" strokeWidth="1.500" /></Icon>}
          />
        </div>
      </div>
      <div className="mt-auto mb-[10px] flex items-center justify-between pl-[3px]">
        <label className="flex items-center gap-[6px] whitespace-nowrap">
          <input type="checkbox" className={checkboxClass} />
          Opóźnij aktualizację ukła...
        </label>
        <button type="button" disabled className="h-[22px] w-[75px] border border-[#dcdcdc] bg-white text-[#b0b0b0]">AKTUALIZUJ</button>
      </div>
    </aside>
  );
}

function StatusBar() {
  const view = 'flex w-[38px] items-center justify-center';
  return (
    <footer className="flex h-[22px] items-stretch border-t border-[#c6c6c6] bg-[#f0f0f0] text-[11px]">
      <span className="flex flex-1 items-center pl-[7px]">Gotowy</span>
      <button type="button" aria-label="Normalny" className={clsx(view, 'bg-[#c6c6c6]')}>
        <Icon w={14} h={13}><path d="M.5.5h13v12H.5zM4.500 0v13M9.500 0v13M0 4.500h14M0 8.500h14" stroke="#666" /></Icon>
      </button>
      <button type="button" aria-label="Układ strony" className={view}>
        <Icon w={14} h={13}><path d="M.5.5h13v12H.5zM3.500 2.500h7v8h-7zM5 4.500h4M5 6.500h4M5 8.500h4" stroke="#666" /></Icon>
      </button>
      <button type="button" aria-label="Podgląd podziału stron" className={view}>
        <Icon w={14} h={13}><path d="M.5.5h13v12H.5zM4.500 0v7.500M9.500 0v7.500M0 7.500h10" stroke="#666" /></Icon>
      </button>
      <button type="button" aria-label="Pomniejsz" className="ml-1 flex w-[11px] items-center">
        <Icon w={7} h={2}><path d="M0 0h7v2H0z" fill="#555" /></Icon>
      </button>
      <input
        type="range"
        aria-label="Powiększenie"
        defaultValue={50}
        className="my-auto h-[11px] w-[100px] appearance-none bg-transparent [&::-webkit-slider-runnable-track]:h-px [&::-webkit-slider-runnable-track]:bg-[#999] [&::-webkit-slider-thumb]:-mt-[5px] [&::-webkit-slider-thumb]:h-[11px] [&::-webkit-slider-thumb]:w-1 [&::-webkit-slider-thumb]:appearance-none [&::-webkit-slider-thumb]:bg-[#666]"
      />
      <button type="button" aria-label="Powiększ" className="ml-1 flex items-center">
        <Icon w={8} h={8}><path d="M3 0h2v3h3v2H5v3H3V5H0V3h3z" fill="#555" /></Icon>
      </button>
      <button type="button" className="ml-4 w-[45px] text-left">100%</button>
    </footer>
  );
}

export default function App() {
  return (
    <div className="flex min-h-screen flex-col bg-[#e6e6e6] text-[#444] [font-family:'Open_Sans','Noto_Sans',sans-serif]">
      <header className="flex h-[93px] border-b border-[#d2d2d2] bg-[#f0f0f0] pb-[2px]">
        <ClipboardGroup />
        <FontGroup />
        <AlignGroup />
        <NumberGroup />
        <StylesGroup />
        <CellsGroup />
        <EditGroup />
        <div className="flex flex-1 items-end justify-end pr-[9px] pb-1">
          <button type="button" aria-label="Zwiń wstążkę">
            <Icon w={9} h={6}><path d="M1 5l3.500-3.500L8 5" stroke="#666" strokeWidth="2" /></Icon>
          </button>
        </div>
      </header>
      <FormulaBar />
      <main className="flex flex-1">
        <div className="flex min-w-0 flex-1 flex-col">
          <div className="flex flex-1">
            <Sheet />
            <div className="mr-[3px] ml-[3px] flex w-[15px] flex-col bg-[#dadada] pt-[2px]">
              <ScrollButton label="Przewiń w górę" d="M0 5h7L3.500 1.500z" />
              <span className="-mt-px h-[598px] border border-[#b5b5b5] bg-white" />
              <span className="flex-1" />
              <ScrollButton label="Przewiń w dół" d="M0 2h7L3.500 5.500z" />
            </div>
          </div>
          <SheetTabs />
        </div>
        <PivotPane />
      </main>
      <StatusBar />
    </div>
  );
}
